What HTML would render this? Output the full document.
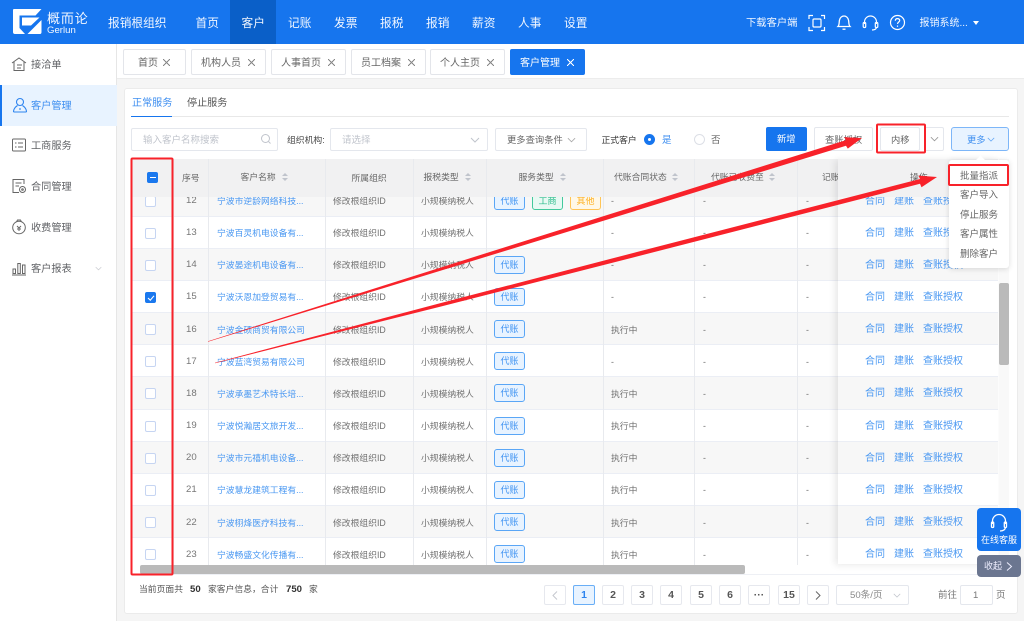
<!DOCTYPE html>
<html lang="zh"><head><meta charset="utf-8"><title>客户管理</title>
<style>
*{box-sizing:border-box;margin:0;padding:0}
html,body{width:1024px;height:621px;overflow:hidden;background:#f5f5f5}
body{position:relative;font-family:"Liberation Sans","Noto Sans CJK SC",sans-serif;color:#606266;font-size:9px}
#p{position:absolute;left:0;top:0;width:1024px;height:621px;filter:blur(.35px)}
span,b{position:absolute;white-space:nowrap;line-height:1}
#top{position:absolute;left:0;top:0;width:1024px;height:44px;background:#1675ee;color:#f2f7ff}
#top span{font-size:11.7px;top:18px}
.box{position:absolute;background:#fff;border:1px solid #e4e7ed;border-radius:2px}
.tab{position:absolute;top:49px;height:26px;background:#fff;border:1px solid #e3e5ea;border-radius:2px;font-size:10px;color:#666}
.tab span{top:8.500px}
.tab i{position:absolute;top:8.500px;right:10px;width:7px;height:7px;background:linear-gradient(45deg,transparent 46%,#888 46%,#888 54%,transparent 54%),linear-gradient(-45deg,transparent 46%,#888 46%,#888 54%,transparent 54%)}
.side{position:absolute;left:0;width:117px;height:41px}
.side span{left:31px;top:17px;font-size:10.2px;color:#606266}
.side svg{position:absolute;left:11px;top:12px}
.hd{position:absolute;top:159px;height:38px;background:#f1f1f2}
.h{top:173px;font-size:8.800px;color:#666}
.s{position:absolute;width:6px;height:9px;top:173px}
.s:before,.s:after{content:"";position:absolute;left:0;border-left:3px solid transparent;border-right:3px solid transparent}
.s:before{top:0;border-bottom:3.5px solid #c0c4cc}.s:after{top:5px;border-top:3.5px solid #c0c4cc}
.v{position:absolute;top:159px;width:1px;height:406px;background:#e8eaee}
#rows{position:absolute;left:131px;top:197px;width:707px;height:368px;overflow:hidden}
.r{position:absolute;left:0;width:707px;height:32.15px;border-bottom:1px solid #ebeef5;background:#fff}
.r.e{background:#f7f7f7}
.r>span{top:12.500px;font-size:8.800px;color:#707070}
.r>.no{left:55px;top:11.500px;font-size:9.600px;color:#777}
.r>.nm{left:86px;color:#4a98f2}
.r>.og{left:202px}.r>.tx{left:290px}
.r>.st{left:480px}.r>.d1{left:572px}.r>.d2{left:675px}.r>.x{left:480px}
.c{position:absolute;left:14px;top:11px;width:11px;height:11px;background:#fff;border:1px solid #c6d5f2;border-radius:2px}
.c.on{background:#1a78ee;border-color:#1a78ee}
.t{position:absolute;top:7px;left:363px;width:31px;height:18px;border:1px solid #5aa6f6;background:#e8f3ff;border-radius:3px;color:#3f93f2;font-size:9px;font-weight:normal;text-align:center;line-height:16px}
.t.g{border-color:#42c99c;background:#e8f9f3;color:#2dbd8c;left:401px}
.t.y{border-color:#ffc557;background:#fff8e8;color:#ffb224;left:439px}
#fx{position:absolute;left:838px;top:159px;width:160px;height:405px;background:#fff;overflow:hidden}
.fr{position:absolute;left:0;width:160px;height:32.15px;border-bottom:1px solid #ebeef5;background:#fff}
.fr.e{background:#f7f7f7}
.fr span{top:12px;font-size:10px;color:#4a98f2}
.pg{position:absolute;top:585px;width:22px;height:20px;border:1px solid #e6e8ee;border-radius:2px;background:#fff;text-align:center;font-size:10.500px;font-weight:bold;line-height:18px;color:#555}
.pg svg{position:absolute;left:7px;top:5px}
.dd{position:absolute;left:960px;font-size:9.500px;color:#666}
</style></head><body><div id="p">

<div id="top">
<svg style="position:absolute;left:0;top:0" width="44" height="44" viewBox="0 0 44 44"><path fill="#fff" d="M14 9H41.500L35.500 15.500H19.500V28L25 34H15Q13 34 13 32V10Q13 9 14 9Z"/><path fill="#fff" d="M22 17.500H39.500L31 25.500H22Z"/><path fill="#fff" d="M27.500 34L41.500 20V32Q41.500 34 40 34Z"/></svg>
<span style="left:47px;top:11.500px;font-size:13px;letter-spacing:.9px">概而论</span>
<span style="left:47px;top:26px;font-size:9.600px">Gerlun</span>
<span style="left:108px">报销根组织</span>
<div style="position:absolute;left:230px;top:0;width:46px;height:44px;background:#0a5fc8"></div>
<span style="left:195.500px">首页</span><span style="left:241.500px">客户</span><span style="left:288px">记账</span><span style="left:334px">发票</span><span style="left:380px">报税</span><span style="left:426px">报销</span><span style="left:472px">薪资</span><span style="left:518px">人事</span><span style="left:564px">设置</span>
<span style="left:746px;top:18.500px;font-size:10.300px">下载客户端</span>
<svg style="position:absolute;left:808px;top:14px" width="18" height="18" viewBox="0 0 18 18" fill="none" stroke="#fff" stroke-width="1.200"><path d="M1 5V1.500H5M13 1.500H16.500V5M16.500 13V16.500H13M5 16.500H1V13"/><rect x="5" y="5" width="8" height="8" rx="1"/></svg>
<svg style="position:absolute;left:836px;top:14px" width="16" height="17" viewBox="0 0 16 17" fill="none" stroke="#fff" stroke-width="1.300"><path d="M2 12.500C3.500 11 3 8 3.500 6C4 3.500 6 2 8 2S12 3.500 12.500 6C13 8 12.500 11 14 12.500Z"/><path d="M6.500 15.200H9.500"/></svg>
<svg style="position:absolute;left:862px;top:14px" width="17" height="18" viewBox="0 0 17 18" fill="none" stroke="#fff" stroke-width="1.200"><path d="M2.500 10V8A6 6 0 0 1 14.500 8V10"/><rect x="1.200" y="8.500" width="2.500" height="5" rx="1"/><rect x="13.300" y="8.500" width="2.500" height="5" rx="1"/><path d="M14.500 13.500C14 15.500 12 16 10 16"/></svg>
<svg style="position:absolute;left:889px;top:14px" width="17" height="17" viewBox="0 0 17 17" fill="none" stroke="#fff" stroke-width="1.200"><circle cx="8.500" cy="8.500" r="7"/><path d="M6.300 6.800C6.300 5.300 7.300 4.600 8.500 4.600C9.800 4.600 10.700 5.400 10.700 6.500C10.700 8 8.500 8 8.500 10"/><path d="M8.500 11.500V12.800"/></svg>
<span style="left:919.500px;top:18.500px;font-size:10px">报销系统...</span>
<div style="position:absolute;left:973px;top:21px;border-left:3.500px solid transparent;border-right:3.500px solid transparent;border-top:4px solid #fff"></div>
</div>

<div style="position:absolute;left:0;top:44px;width:117px;height:577px;background:#fff;border-right:1px solid #e6e6e6"></div>
<div style="position:absolute;left:117px;top:44px;width:907px;height:35px;background:#fff;border-bottom:1px solid #ececec"></div>
<div class="side" style="top:44px"><svg width="16" height="16" viewBox="0 0 16 16" fill="none" stroke="#666" stroke-width="1"><path d="M1 7L8 2L15 7"/><path d="M3 6V14.500H13V6"/><path d="M6 9H11M6 12H10"/></svg><span>接洽单</span></div>
<div class="side" style="top:85px;background:#e8f3ff;border-left:2px solid #1675ee"><svg style="left:10px" width="16" height="16" viewBox="0 0 16 16" fill="none" stroke="#2d84ef" stroke-width="1.100"><circle cx="8" cy="5" r="3.500"/><path d="M1.500 15C1.500 11 4 9.500 5.500 8.500M14.500 15C14.500 11 12 9.500 10.500 8.500M1.500 15H14.500M8 11V13"/></svg><span style="left:29px;color:#3f8ff0">客户管理</span></div>
<div class="side" style="top:125px"><svg width="16" height="16" viewBox="0 0 16 16" fill="none" stroke="#666" stroke-width="1"><rect x="1.500" y="2" width="13" height="12" rx="1"/><path d="M7 6H12M7 10H12M4 6H5.500M4 10H5.500"/></svg><span>工商服务</span></div>
<div class="side" style="top:166px"><svg width="16" height="16" viewBox="0 0 16 16" fill="none" stroke="#666" stroke-width="1"><path d="M13 6V1.500H2V14.500H8"/><path d="M4.500 5H10.500M4.500 8H8"/><circle cx="11.500" cy="11.500" r="3"/><circle cx="11.500" cy="11.500" r=".8"/></svg><span>合同管理</span></div>
<div class="side" style="top:207px"><svg width="16" height="16" viewBox="0 0 16 16" fill="none" stroke="#666" stroke-width="1"><circle cx="8" cy="8.500" r="6.300"/><path d="M5.500 3L6.500 1H9.500L10.500 3M6 7L8 9L10 7M8 9V12M6 10H10"/></svg><span>收费管理</span></div>
<div class="side" style="top:248px"><svg width="16" height="16" viewBox="0 0 16 16" fill="none" stroke="#666" stroke-width="1"><rect x="2" y="9" width="2.500" height="4.500"/><rect x="6.800" y="3.500" width="2.500" height="10"/><rect x="11.500" y="5" width="2.500" height="8.500"/><path d="M1 15H15"/></svg><span>客户报表</span><svg style="left:94.500px;top:18px" width="7" height="5" viewBox="0 0 10 6" fill="none" stroke="#c9cbd0"><path d="M1 1L5 5L9 1"/></svg></div>

<div class="tab" style="left:123px;width:63px"><span style="left:14px">首页</span><i style="right:15px"></i></div>
<div class="tab" style="left:191px;width:75px"><span style="left:9px">机构人员</span><i></i></div>
<div class="tab" style="left:271px;width:75px"><span style="left:9px">人事首页</span><i></i></div>
<div class="tab" style="left:351px;width:75px"><span style="left:9px">员工档案</span><i></i></div>
<div class="tab" style="left:430px;width:75px"><span style="left:9px">个人主页</span><i></i></div>
<div class="tab" style="left:510px;width:75px;background:#1675ee;border-color:#1675ee;color:#fff"><span style="left:9px">客户管理</span><i style="background:linear-gradient(45deg,transparent 46%,#fff 46%,#fff 54%,transparent 54%),linear-gradient(-45deg,transparent 46%,#fff 46%,#fff 54%,transparent 54%)"></i></div>

<div style="position:absolute;left:124px;top:88px;width:894px;height:526px;background:#fff;border:1px solid #ebebeb;border-radius:3px"></div>
<span style="left:132px;top:98.500px;font-size:10.100px;color:#3f8ff0">正常服务</span>
<span style="left:187px;top:98.500px;font-size:10.100px;color:#555">停止服务</span>
<div style="position:absolute;left:131px;top:116px;width:878px;height:1px;background:#e8e8e8"></div>
<div style="position:absolute;left:131px;top:115.500px;width:41px;height:1.500px;background:#1675ee"></div>

<div class="box" style="left:131px;top:128px;width:147px;height:23px"></div>
<span style="left:143px;top:135.500px;font-size:9.500px;color:#c0c4cc">输入客户名称搜索</span>
<svg style="position:absolute;left:260px;top:133px" width="12" height="12" viewBox="0 0 12 12" fill="none" stroke="#c0c4cc"><circle cx="5.500" cy="5.500" r="4"/><path d="M8.500 8.500L10.500 10.500"/></svg>
<span style="left:287px;top:135.500px;font-size:8.800px;color:#444">组织机构:</span>
<div class="box" style="left:330px;top:128px;width:158px;height:23px"></div>
<span style="left:342px;top:135.500px;font-size:9.500px;color:#c0c4cc">请选择</span>
<svg style="position:absolute;left:470px;top:137px" width="10" height="6" viewBox="0 0 10 6" fill="none" stroke="#c0c4cc"><path d="M1 1L5 5L9 1"/></svg>
<div class="box" style="left:495px;top:128px;width:92px;height:23px"></div>
<span style="left:507px;top:135.500px;font-size:9.300px;color:#666">更多查询条件</span>
<svg style="position:absolute;left:567px;top:137px" width="9" height="6" viewBox="0 0 10 6" fill="none" stroke="#aaa"><path d="M1 1L5 5L9 1"/></svg>
<span style="left:601.500px;top:135.500px;font-size:8.800px;color:#333">正式客户</span>
<div style="position:absolute;left:644px;top:134px;width:11px;height:11px;border-radius:50%;background:#1675ee"></div>
<div style="position:absolute;left:648px;top:138px;width:3px;height:3px;border-radius:50%;background:#fff"></div>
<span style="left:662px;top:135.500px;font-size:9.500px;color:#3f8ff0">是</span>
<div style="position:absolute;left:694px;top:134px;width:11px;height:11px;border-radius:50%;border:1px solid #dcdfe6;background:#fff"></div>
<span style="left:711px;top:135.500px;font-size:9.500px;color:#666">否</span>
<div style="position:absolute;left:766px;top:127px;width:41px;height:24px;background:#1675ee;border-radius:2px"></div>
<span style="left:777px;top:135px;font-size:9.300px;color:#fff">新增</span>
<div class="box" style="left:814px;top:127px;width:59px;height:24px"></div>
<span style="left:825px;top:135.500px;font-size:9.300px;color:#666">查账授权</span>
<div class="box" style="left:880px;top:127px;width:40px;height:24px"></div>
<span style="left:891px;top:135.500px;font-size:9.300px;color:#666">内移</span>
<div class="box" style="left:924px;top:127px;width:20px;height:24px"></div>
<svg style="position:absolute;left:930px;top:136px" width="9" height="6" viewBox="0 0 10 6" fill="none" stroke="#999"><path d="M1 1L5 5L9 1"/></svg>
<div style="position:absolute;left:951px;top:127px;width:58px;height:24px;background:#e8f3ff;border:1px solid #7db6f8;border-radius:3px"></div>
<span style="left:967px;top:135.500px;font-size:9.300px;color:#3f8ff0">更多</span>
<svg style="position:absolute;left:987px;top:137px" width="8" height="5" viewBox="0 0 10 6" fill="none" stroke="#5fa5f5"><path d="M1 1L5 5L9 1"/></svg>

<div class="hd" style="left:131px;width:867px"></div>
<div id="rows">
<div class="r e" style="top:-12.500px"><b class="c"></b><span class="no">12</span><span class="nm">宁波市逆龄网络科技...</span><span class="og">修改根组织ID</span><span class="tx">小规模纳税人</span><b class="t">代账</b><b class="t g">工商</b><b class="t y">其他</b><span class="st">-</span><span class="d1">-</span><span class="d2">-</span></div>
<div class="r" style="top:19.650px"><b class="c"></b><span class="no">13</span><span class="nm">宁波百灵机电设备有...</span><span class="og">修改根组织ID</span><span class="tx">小规模纳税人</span><span class="st">-</span><span class="d1">-</span><span class="d2">-</span></div>
<div class="r e" style="top:51.800px"><b class="c"></b><span class="no">14</span><span class="nm">宁波晏途机电设备有...</span><span class="og">修改根组织ID</span><span class="tx">小规模纳税人</span><b class="t">代账</b><span class="st">-</span><span class="d1">-</span><span class="d2">-</span></div>
<div class="r" style="top:83.950px"><b class="c on"><svg style="position:absolute;left:1px;top:1px" width="8" height="8" viewBox="0 0 8 8" fill="none" stroke="#fff" stroke-width="1.100"><path d="M1 4L3.300 6.200L7 1.800"/></svg></b><span class="no">15</span><span class="nm">宁波沃恩加登贸易有...</span><span class="og">修改根组织ID</span><span class="tx">小规模纳税人</span><b class="t">代账</b><span class="st">-</span><span class="d1">-</span><span class="d2">-</span></div>
<div class="r e" style="top:116.100px"><b class="c"></b><span class="no">16</span><span class="nm">宁波金硕商贸有限公司</span><span class="og">修改根组织ID</span><span class="tx">小规模纳税人</span><b class="t">代账</b><span class="x">执行中</span><span class="d1">-</span><span class="d2">-</span></div>
<div class="r" style="top:148.250px"><b class="c"></b><span class="no">17</span><span class="nm">宁波蓝湾贸易有限公司</span><span class="og">修改根组织ID</span><span class="tx">小规模纳税人</span><b class="t">代账</b><span class="st">-</span><span class="d1">-</span><span class="d2">-</span></div>
<div class="r e" style="top:180.400px"><b class="c"></b><span class="no">18</span><span class="nm">宁波承墨艺术特长培...</span><span class="og">修改根组织ID</span><span class="tx">小规模纳税人</span><b class="t">代账</b><span class="x">执行中</span><span class="d1">-</span><span class="d2">-</span></div>
<div class="r" style="top:212.550px"><b class="c"></b><span class="no">19</span><span class="nm">宁波悦瀚居文旅开发...</span><span class="og">修改根组织ID</span><span class="tx">小规模纳税人</span><b class="t">代账</b><span class="x">执行中</span><span class="d1">-</span><span class="d2">-</span></div>
<div class="r e" style="top:244.700px"><b class="c"></b><span class="no">20</span><span class="nm">宁波市元禧机电设备...</span><span class="og">修改根组织ID</span><span class="tx">小规模纳税人</span><b class="t">代账</b><span class="x">执行中</span><span class="d1">-</span><span class="d2">-</span></div>
<div class="r" style="top:276.850px"><b class="c"></b><span class="no">21</span><span class="nm">宁波慧龙建筑工程有...</span><span class="og">修改根组织ID</span><span class="tx">小规模纳税人</span><b class="t">代账</b><span class="x">执行中</span><span class="d1">-</span><span class="d2">-</span></div>
<div class="r e" style="top:309px"><b class="c"></b><span class="no">22</span><span class="nm">宁波栩烽医疗科技有...</span><span class="og">修改根组织ID</span><span class="tx">小规模纳税人</span><b class="t">代账</b><span class="x">执行中</span><span class="d1">-</span><span class="d2">-</span></div>
<div class="r" style="top:341.150px"><b class="c"></b><span class="no">23</span><span class="nm">宁波畅盛文化传播有...</span><span class="og">修改根组织ID</span><span class="tx">小规模纳税人</span><b class="t">代账</b><span class="x">执行中</span><span class="d1">-</span><span class="d2">-</span></div>
</div>
<div class="v" style="left:173px"></div><div class="v" style="left:208px"></div><div class="v" style="left:325px"></div><div class="v" style="left:413px"></div><div class="v" style="left:486px"></div><div class="v" style="left:603px"></div><div class="v" style="left:694px"></div><div class="v" style="left:797px"></div>

<div style="position:absolute;left:147px;top:172px;width:11px;height:11px;background:#1a78ee;border-radius:2px"></div>
<div style="position:absolute;left:149.500px;top:177px;width:6px;height:1.200px;background:#fff"></div>
<span class="h" style="left:182px;top:173.500px">序号</span>
<span class="h" style="left:240.500px">客户名称</span><i class="s" style="left:282px"></i>
<span class="h" style="left:351.500px;top:174px">所属组织</span>
<span class="h" style="left:423.500px">报税类型</span><i class="s" style="left:465px"></i>
<span class="h" style="left:518.500px">服务类型</span><i class="s" style="left:560px"></i>
<span class="h" style="left:614px">代账合同状态</span><i class="s" style="left:672px"></i>
<span class="h" style="left:711px">代账已收费至</span><i class="s" style="left:769px"></i>
<span class="h" style="left:822px">记账</span>

<div style="position:absolute;left:838px;top:159px;width:160px;height:405px;box-shadow:-3px 1px 7px rgba(0,0,0,.09)"></div>
<div id="fx">
<div class="fr e" style="top:25.500px"><span style="left:27px">合同</span><span style="left:56px">建账</span><span style="left:85px">查账授权</span></div>
<div class="fr" style="top:57.650px"><span style="left:27px">合同</span><span style="left:56px">建账</span><span style="left:85px">查账授权</span></div>
<div class="fr e" style="top:89.800px"><span style="left:27px">合同</span><span style="left:56px">建账</span><span style="left:85px">查账授权</span></div>
<div class="fr" style="top:121.950px"><span style="left:27px">合同</span><span style="left:56px">建账</span><span style="left:85px">查账授权</span></div>
<div class="fr e" style="top:154.100px"><span style="left:27px">合同</span><span style="left:56px">建账</span><span style="left:85px">查账授权</span></div>
<div class="fr" style="top:186.250px"><span style="left:27px">合同</span><span style="left:56px">建账</span><span style="left:85px">查账授权</span></div>
<div class="fr e" style="top:218.400px"><span style="left:27px">合同</span><span style="left:56px">建账</span><span style="left:85px">查账授权</span></div>
<div class="fr" style="top:250.550px"><span style="left:27px">合同</span><span style="left:56px">建账</span><span style="left:85px">查账授权</span></div>
<div class="fr e" style="top:282.700px"><span style="left:27px">合同</span><span style="left:56px">建账</span><span style="left:85px">查账授权</span></div>
<div class="fr" style="top:314.850px"><span style="left:27px">合同</span><span style="left:56px">建账</span><span style="left:85px">查账授权</span></div>
<div class="fr e" style="top:347px"><span style="left:27px">合同</span><span style="left:56px">建账</span><span style="left:85px">查账授权</span></div>
<div class="fr" style="top:379.150px"><span style="left:27px">合同</span><span style="left:56px">建账</span><span style="left:85px">查账授权</span></div>
<div style="position:absolute;left:0;top:0;width:160px;height:38px;background:#f1f1f2"></div>
<span style="left:72px;top:14px;font-size:8.800px;color:#666">操作</span>
</div>

<div style="position:absolute;left:999px;top:159px;width:10px;height:406px;background:#f9f9f9"></div>
<div style="position:absolute;left:999px;top:283px;width:10px;height:82px;background:#bababa;border-radius:2px"></div>
<div style="position:absolute;left:131px;top:574px;width:878px;height:1px;background:#eef0f5"></div>
<div style="position:absolute;left:140px;top:565px;width:605px;height:9px;background:#bababa;border-radius:2px"></div>

<span style="left:139px;top:585px;font-size:8.800px;color:#555">当前页面共</span>
<span style="left:190px;top:584.500px;font-size:9.600px;font-weight:bold;color:#333">50</span>
<span style="left:208px;top:585px;font-size:8.800px;color:#555">家客户信息，合计</span>
<span style="left:286px;top:584.500px;font-size:9.600px;font-weight:bold;color:#333">750</span>
<span style="left:309px;top:585px;font-size:8.800px;color:#555">家</span>

<div class="pg" style="left:544px"><svg width="6" height="9" viewBox="0 0 6 9" fill="none" stroke="#c5c8ce"><path d="M5 .5L1 4.500L5 8.500"/></svg></div>
<div class="pg" style="left:573px;background:#e8f3ff;border-color:#69aef6;color:#2d84ef">1</div>
<div class="pg" style="left:602px">2</div><div class="pg" style="left:631px">3</div><div class="pg" style="left:660px">4</div><div class="pg" style="left:690px">5</div><div class="pg" style="left:719px">6</div><div class="pg" style="left:748px">···</div><div class="pg" style="left:778px">15</div>
<div class="pg" style="left:807px"><svg width="6" height="9" viewBox="0 0 6 9" fill="none" stroke="#666"><path d="M1 .5L5 4.500L1 8.500"/></svg></div>
<div class="box" style="left:836px;top:585px;width:73px;height:20px"></div>
<span style="left:850px;top:590.500px;font-size:9.600px;color:#888">50条/页</span>
<svg style="position:absolute;left:893px;top:593px" width="8" height="5" viewBox="0 0 10 6" fill="none" stroke="#c0c4cc"><path d="M1 1L5 5L9 1"/></svg>
<span style="left:938px;top:590.500px;font-size:9.500px;color:#777">前往</span>
<div class="box" style="left:960px;top:585px;width:33px;height:20px"></div>
<span style="left:973px;top:590.500px;font-size:9.500px;color:#777">1</span>
<span style="left:996px;top:590.500px;font-size:9.500px;color:#777">页</span>

<div style="position:absolute;left:949px;top:160px;width:60px;height:108px;background:#fff;border-radius:3px;box-shadow:0 1px 6px rgba(0,0,0,.14)"></div>
<div style="position:absolute;left:977px;top:157px;width:7px;height:7px;background:#fff;transform:rotate(45deg)"></div>
<span class="dd" style="top:171.500px">批量指派</span>
<span class="dd" style="top:191px">客户导入</span>
<span class="dd" style="top:210.500px">停止服务</span>
<span class="dd" style="top:230px">客户属性</span>
<span class="dd" style="top:249.500px">删除客户</span>

<div style="position:absolute;left:977px;top:508px;width:44px;height:43px;background:#1675ee;border-radius:4px"></div>
<svg style="position:absolute;left:990px;top:513px" width="18" height="20" viewBox="0 0 18 20" fill="none" stroke="#fff" stroke-width="1.300"><path d="M2.500 11V8A6.500 6.500 0 0 1 15.500 8V11"/><rect x="1.500" y="9" width="2.200" height="5.500" rx="1"/><rect x="14.300" y="9" width="2.200" height="5.500" rx="1"/><path d="M15.500 14.500C15 17 13 18 10 18"/></svg>
<span style="left:981px;top:535.500px;font-size:9px;color:#fff">在线客服</span>
<div style="position:absolute;left:977px;top:555px;width:44px;height:22px;background:#6b7690;border-radius:4px"></div>
<span style="left:984px;top:561.500px;font-size:9px;color:#eef">收起</span>
<svg style="position:absolute;left:1006px;top:562px" width="7" height="9" viewBox="0 0 7 9" fill="none" stroke="#eef" stroke-width="1"><path d="M1 .5L5.500 4.500L1 8.500"/></svg>

<svg style="position:absolute;left:0;top:0" width="1024" height="621" fill="none">
<rect x="131.500" y="158.500" width="41" height="416" stroke="#f8222a" stroke-width="2" rx="1"/>
<rect x="877" y="124.500" width="48" height="28" stroke="#f8222a" stroke-width="2" rx="1"/>
<rect x="949" y="165" width="59" height="20" stroke="#f8222a" stroke-width="2" rx="1"/>
<polygon fill="#f8222a" points="208,341.300 440,267.700 610,214.100 846,140.100 844.200,137.200 862,138 847.800,148.600 846,145.700 610,218.700 440,270.900 208,341.700"/>
<polygon fill="#f8222a" points="215,362.700 440,303.300 610,259 920,179 918.500,175.600 937,177 921.500,187.200 920,183.800 610,263.400 440,306.700 215,363.300"/>
</svg>
</div></body></html>
